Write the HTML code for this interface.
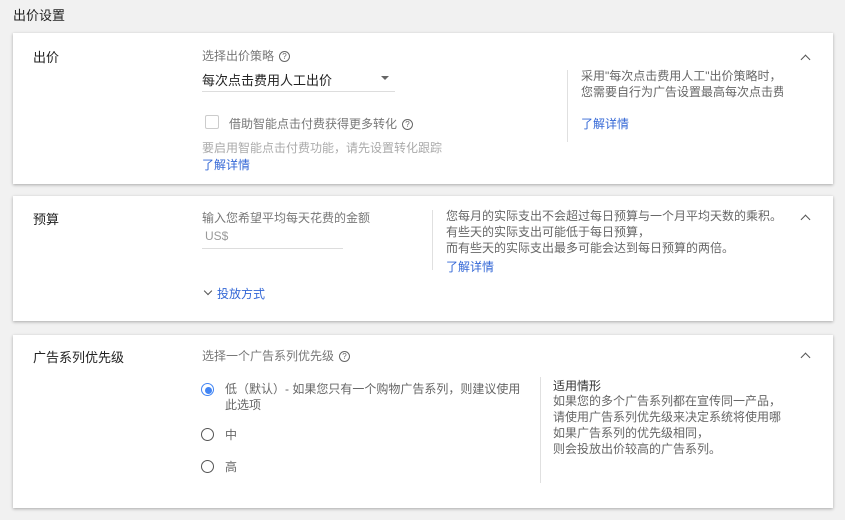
<!DOCTYPE html><html><head><meta charset="utf-8"><style>
body{margin:0;width:845px;height:520px;background:#f1f1f1;font-family:"Liberation Sans","Noto Sans CJK SC",sans-serif;position:relative;overflow:hidden;color:#333}
.a{position:absolute;white-space:nowrap}
.card{position:absolute;left:13px;width:820px;background:#fff;box-shadow:0 1px 3px rgba(0,0,0,.3)}
.lbl{font-size:13px;color:#222}
.g{font-size:12px;color:#777}
.s{font-size:12px;color:#666;line-height:16px}
.lk{font-size:12px;color:#3367d6}
.car{position:absolute;width:6px;height:6px;border-left:1.5px solid #555;border-top:1.5px solid #555;transform:rotate(45deg)}
.vl{position:absolute;width:1px;background:#e0e0e0}
.q{display:inline-block;width:9px;height:9px;border:1px solid #666;border-radius:50%;font-size:8px;line-height:9px;text-align:center;color:#666;vertical-align:1px;margin-left:5px}
.r{position:absolute;width:11px;height:11px;border:1.5px solid #555;border-radius:50%}
</style></head><body>
<div class="a" style="left:13px;top:5px;font-size:13px;color:#222">出价设置</div>

<div class="card" style="top:33px;height:151px"></div>
<div class="a lbl" style="left:33px;top:47px">出价</div>
<div class="a g" style="left:202px;top:47px">选择出价策略<span class="q">?</span></div>
<div class="a" style="left:202px;top:70px;font-size:13px;color:#222">每次点击费用人工出价</div>
<div class="a" style="left:381px;top:76px;width:0;height:0;border-left:4px solid transparent;border-right:4px solid transparent;border-top:4px solid #666"></div>
<div class="a" style="left:202px;top:91px;width:193px;height:1px;background:#ddd"></div>
<div class="a" style="left:205px;top:115px;width:12px;height:12px;border:1.5px solid #ccc;border-radius:2px"></div>
<div class="a" style="left:229px;top:115px;font-size:12px;color:#777">借助智能点击付费获得更多转化<span class="q">?</span></div>
<div class="a" style="left:202px;top:139px;font-size:12px;color:#aaa">要启用智能点击付费功能，请先设置转化跟踪</div>
<div class="a lk" style="left:202px;top:156px">了解详情</div>
<div class="vl" style="left:567px;top:70px;height:72px"></div>
<div class="a s" style="left:581px;top:68px;width:202px;overflow:hidden">采用"每次点击费用人工"出价策略时，<br>您需要自行为广告设置最高每次点击费</div>
<div class="a lk" style="left:581px;top:115px">了解详情</div>
<div class="car" style="left:802px;top:56px"></div>

<div class="card" style="top:196px;height:125px"></div>
<div class="a lbl" style="left:33px;top:209px">预算</div>
<div class="a g" style="left:202px;top:209px">输入您希望平均每天花费的金额</div>
<div class="a" style="left:205px;top:229px;font-size:12px;color:#999">US$</div>
<div class="a" style="left:202px;top:248px;width:141px;height:1px;background:#ddd"></div>
<div class="a" style="left:205px;top:288px;width:5px;height:5px;border-right:1.5px solid #555;border-bottom:1.5px solid #555;transform:rotate(45deg)"></div>
<div class="a" style="left:217px;top:285px;font-size:12px;color:#3367d6">投放方式</div>
<div class="vl" style="left:432px;top:210px;height:60px"></div>
<div class="a s" style="left:446px;top:208px">您每月的实际支出不会超过每日预算与一个月平均天数的乘积。<br>有些天的实际支出可能低于每日预算，<br>而有些天的实际支出最多可能会达到每日预算的两倍。</div>
<div class="a lk" style="left:446px;top:258px">了解详情</div>
<div class="car" style="left:802px;top:216px"></div>

<div class="card" style="top:335px;height:173px"></div>
<div class="a lbl" style="left:33px;top:347px">广告系列优先级</div>
<div class="a g" style="left:202px;top:347px">选择一个广告系列优先级<span class="q">?</span></div>
<div class="r" style="left:201px;top:383px;border-color:#4285f4"></div>
<div class="a" style="left:204.5px;top:386.5px;width:7px;height:7px;border-radius:50%;background:#4285f4"></div>
<div class="a s" style="left:225px;top:381px">低（默认）- 如果您只有一个购物广告系列，则建议使用<br>此选项</div>
<div class="r" style="left:201px;top:428px"></div>
<div class="a s" style="left:225px;top:427px">中</div>
<div class="r" style="left:201px;top:460px"></div>
<div class="a s" style="left:225px;top:459px">高</div>
<div class="vl" style="left:540px;top:377px;height:106px"></div>
<div class="a" style="left:553px;top:377px;font-size:12px;color:#333">适用情形</div>
<div class="a s" style="left:553px;top:393px">如果您的多个广告系列都在宣传同一产品，<br>请使用广告系列优先级来决定系统将使用哪<br>如果广告系列的优先级相同，<br>则会投放出价较高的广告系列。</div>
<div class="car" style="left:802px;top:354px"></div>
</body></html>
